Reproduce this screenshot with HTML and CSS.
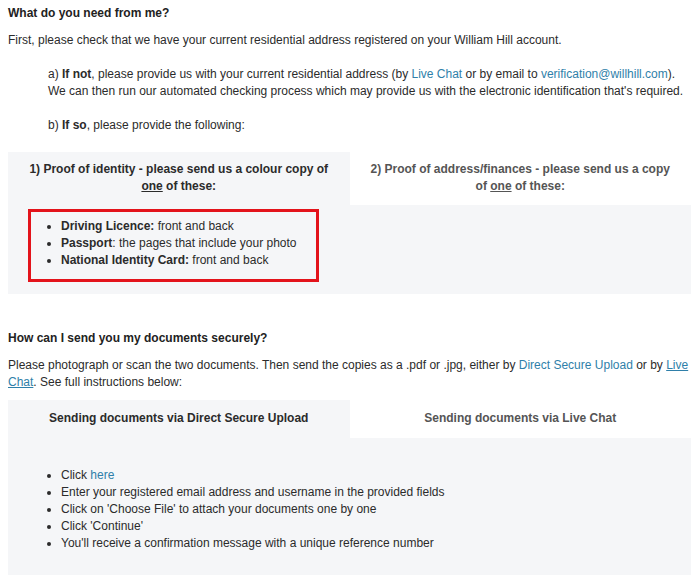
FILE: index.html
```html
<!DOCTYPE html>
<html>
<head>
    <link rel="stylesheet" href="styles.css">
</head>
<body>
    <div id="help-article">
        <!-- What do you need -->
        <h3 class="section-title">What do you need from me?</h3>
        <p>First, please check that we have your current residential address registered on your William Hill account.</p>

        <div class="indented">
            <p>a) <b>If not</b>, please provide us with your current residential address (by <a href="#">Live Chat</a> or by email to <a href="#">verification@willhill.com</a>).<br>We can then run our automated checking process which may provide us with the electronic identification that's required.</p>
            <p>b) <b>If so</b>, please provide the following:</p>
        </div>

        <div class="tabs">
            <div class="tab-header">
                <div class="tab active">1) Proof of identity - please send us a colour copy of <u>one</u> of these:</div>
                <div class="tab">2) Proof of address/finances - please send us a copy of <u>one</u> of these:</div>
            </div>
            <div class="tab-panel id-panel">
                <div class="highlight">
                    <ul>
                        <li><b>Driving Licence:</b> front and back</li>
                        <li><b>Passport</b>: the pages that include your photo</li>
                        <li><b>National Identity Card:</b> front and back</li>
                    </ul>
                </div>
            </div>
        </div>

        <!-- How to send -->
        <h3 class="section-title second">How can I send you my documents securely?</h3>
        <p>Please photograph or scan the two documents. Then send the copies as a .pdf or .jpg, either by <a href="#">Direct Secure Upload</a> or by <a href="#" class="underlined"> Live Chat</a>. See full instructions below:</p>

        <div class="tabs">
            <div class="tab-header">
                <div class="tab active single">Sending documents via Direct Secure Upload</div>
                <div class="tab single">Sending documents via Live Chat</div>
            </div>
            <div class="tab-panel upload-panel">
                <ul>
                    <li>Click <a href="#">here</a></li>
                    <li>Enter your registered email address and username in the provided fields</li>
                    <li>Click on 'Choose File' to attach your documents one by one</li>
                    <li>Click 'Continue'</li>
                    <li>You'll receive a confirmation message with a unique reference number</li>
                </ul>
            </div>
        </div>
    </div>
</body>
</html>
```

FILE: styles.css
```css
/* Global Styles */
body {
    margin: 0;
    padding: 5px 8px 0;
    font-family: "Liberation Sans", Arial, sans-serif;
    font-size: 12px;
    line-height: 17px;
    color: #2b2b2b;
    background: #ffffff;
}

p {
    margin: 0 0 17px;
}

a {
    color: #2f7fa9;
    text-decoration: none;
}

a.underlined {
    text-decoration: underline;
}

/* Headings */
.section-title {
    margin: 0 0 10px;
    font-size: 12px;
    font-weight: bold;
    color: #222;
}

.section-title.second {
    margin-top: 36px;
}

.indented {
    margin-left: 40px;
}

/* Tabs */
.tabs {
    margin-top: -8px;
}

.indented + .tabs {
    margin-top: 18px;
}

.tab-header {
    display: flex;
}

.tab {
    flex: 1;
    padding: 9px 20px 10px;
    text-align: center;
    font-weight: bold;
    color: #555;
}

.tab.active {
    background-color: #f5f6f8;
    color: #2b2b2b;
}

.tab.single {
    padding: 10px 20px 11px;
}

.tab-panel {
    background-color: #f5f6f8;
}

.tab-panel ul {
    margin: 0;
    padding-left: 30px;
}

/* Identity list */
.id-panel {
    padding: 4px 0 12px 20px;
}

.highlight {
    width: 285px;
    border: 3px solid #e3131b;
    padding: 6px 0 10px;
}

.upload-panel {
    padding: 29px 0 23px 23px;
}
```
